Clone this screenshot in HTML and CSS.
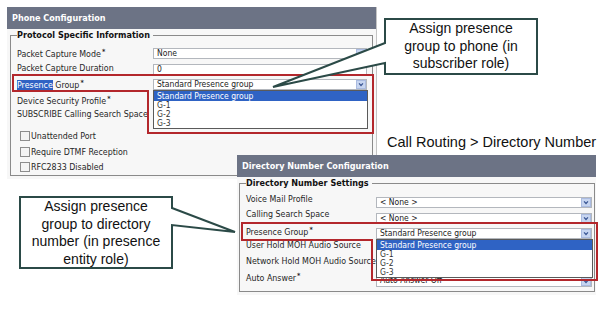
FILE: index.html
```html
<!DOCTYPE html>
<html lang="en">
    <head>
        <meta charset="UTF-8" />
        <meta name="viewport" content="width=device-width, initial-scale=1.0" />
        <title>Presence Group</title>
        <link rel="stylesheet" href="styles.css">
    </head>
    <body>
        <div class="slide">
            <!-- phone screenshot -->
            <div class="shot phone">
                <div class="bar">Phone Configuration</div>
                <div class="body">
                    <fieldset>
                        <legend>Protocol Specific Information</legend>
                        <div class="grid">
                            <div class="label">Packet Capture Mode<sup>*</sup></div>
                            <div class="ctl"><span class="val">None</span><span class="arrow"><svg viewBox="0 0 10 9"><path d="M2.5 3 L5 5.8 L7.5 3" /></svg></span></div>
                            <div class="label">Packet Capture Duration</div>
                            <div class="ctl input"><span class="val">0</span></div>
                            <div class="label"><span class="sel">Presence</span> Group<sup>*</sup></div>
                            <div class="ctl">
                                <span class="val">Standard Presence group</span><span class="arrow"><svg viewBox="0 0 10 9"><path d="M2.5 3 L5 5.8 L7.5 3" /></svg></span>
                                <ul class="list">
                                    <li class="hi">Standard Presence group</li>
                                    <li>G-1</li>
                                    <li>G-2</li>
                                    <li>G-3</li>
                                </ul>
                            </div>
                            <div class="label">Device Security Profile<sup>*</sup></div>
                            <div class="ctl"><span class="val"></span></div>
                            <div class="label">SUBSCRIBE Calling Search Space</div>
                            <div class="ctl"><span class="val"></span></div>
                        </div>
                        <div class="checks">
                            <div class="check"><span class="box"></span>Unattended Port</div>
                            <div class="check"><span class="box"></span>Require DTMF Reception</div>
                            <div class="check"><span class="box"></span>RFC2833 Disabled</div>
                        </div>
                    </fieldset>
                </div>
            </div>

            <p class="caption">Call Routing &gt; Directory Number</p>

            <!-- directory number screenshot -->
            <div class="shot dn">
                <div class="bar">Directory Number Configuration</div>
                <div class="body">
                    <fieldset>
                        <legend>Directory Number Settings</legend>
                        <div class="grid">
                            <div class="label">Voice Mail Profile</div>
                            <div class="ctl"><span class="val">&lt; None &gt;</span><span class="arrow"><svg viewBox="0 0 10 9"><path d="M2.5 3 L5 5.8 L7.5 3" /></svg></span></div>
                            <div class="label">Calling Search Space</div>
                            <div class="ctl"><span class="val">&lt; None &gt;</span><span class="arrow"><svg viewBox="0 0 10 9"><path d="M2.5 3 L5 5.8 L7.5 3" /></svg></span></div>
                            <div class="label">Presence Group<sup>*</sup></div>
                            <div class="ctl">
                                <span class="val">Standard Presence group</span><span class="arrow"><svg viewBox="0 0 10 9"><path d="M2.5 3 L5 5.8 L7.5 3" /></svg></span>
                                <ul class="list">
                                    <li class="hi">Standard Presence group</li>
                                    <li>G-1</li>
                                    <li>G-2</li>
                                    <li>G-3</li>
                                </ul>
                            </div>
                            <div class="label">User Hold MOH Audio Source</div>
                            <div class="ctl"><span class="val"></span></div>
                            <div class="label">Network Hold MOH Audio Source</div>
                            <div class="ctl"><span class="val"></span></div>
                            <div class="label">Auto Answer<sup>*</sup></div>
                            <div class="ctl low"><span class="val">Auto Answer Off</span><span class="arrow"><svg viewBox="0 0 10 9"><path d="M2.5 3 L5 5.8 L7.5 3" /></svg></span></div>
                        </div>
                    </fieldset>
                </div>
            </div>

            <!-- red highlight boxes and callout shapes -->
            <svg class="marks" width="616" height="309" viewBox="0 0 616 309">
                <path class="red" d="M13 75 H373 V133 H148 V91 H13 Z" />
                <path class="red" d="M242 223 H597 V280 H372 V240 H242 Z" />
                <path class="bubble" d="M385 19 H537 V74 H385 V63 L273 87 L385 43 Z" />
                <path class="bubble" d="M20 197 H172 V208 L235 232 L172 225 V268 H20 Z" />
            </svg>

            <div class="callout c1">Assign presence<br>group to phone (in<br>subscriber role)</div>
            <div class="callout c2">Assign presence<br>group to directory<br>number (in presence<br>entity role)</div>
        </div>
    </body>
</html>
```

FILE: styles.css
```css
* {
    margin: 0;
    padding: 0;
    box-sizing: border-box;
}
body {
    background-color: #fff;
    font-family: "DejaVu Sans Condensed", "DejaVu Sans", sans-serif;
    color: #222;
}
.slide {
    position: relative;
    width: 616px;
    height: 309px;
    overflow: hidden;
}
.shot {
    position: absolute;
    display: flex;
    flex-direction: column;
    background-color: #f7f7f7;
}
.phone {
    left: 7px;
    top: 7px;
    width: 370px;
    height: 172px;
    border-right: 1px solid #c4c4c4;
}
.dn {
    left: 237px;
    top: 155px;
    width: 359px;
    height: 140px;
}
.bar {
    height: 22px;
    line-height: 22px;
    padding-left: 5px;
    background-color: #6c7385;
    color: #fff;
    font-size: 9px;
    font-weight: bold;
}
.body {
    flex: 1;
    padding: 1px 3px 3px 3px;
}
.dn .body {
    padding: 1px 1px 3px 2px;
}
fieldset {
    border: 1px solid #8a8a8a;
    padding: 6px 5px 0 6px;
}
.dn fieldset {
    padding: 3px 2px 5px 6px;
}
legend {
    font-size: 9px;
    line-height: 11px;
    font-weight: bold;
    color: #111;
    padding: 0 3px 0 0;
}
.grid {
    display: grid;
    grid-template-columns: 136px 1fr;
    grid-auto-rows: 15.5px;
}
.dn .grid {
    grid-template-columns: 130px 1fr;
    grid-auto-rows: 15.6px;
}
.label {
    font-size: 8.8px;
    line-height: 11px;
    white-space: nowrap;
    color: #262626;
}
.dn .label {
    padding-top: 1.5px;
}
.label sup {
    font-size: 7px;
    font-weight: bold;
    vertical-align: 3px;
    margin-left: 1px;
}
.sel {
    background-color: #2f63c4;
    color: #fff;
}
.ctl {
    position: relative;
    display: flex;
    align-items: center;
    height: 11px;
    margin-top: 1px;
    background-color: #fff;
    border: 1px solid #b3b7bd;
}
.dn .ctl {
    margin-top: 5px;
}
.dn .ctl.low {
    margin-top: 6px;
}
.val {
    flex: 1;
    padding-left: 3px;
    font-size: 8.5px;
    line-height: 9px;
    white-space: nowrap;
}
.low .val {
    line-height: 12px;
    align-self: flex-end;
}
.arrow {
    width: 10px;
    height: 9px;
    background-color: #c7d5f0;
    border: 1px solid #aabbe0;
}
.arrow svg {
    display: block;
    width: 8px;
    height: 7px;
}
.arrow path {
    fill: none;
    stroke: #3a5694;
    stroke-width: 1.6;
}
.list {
    position: absolute;
    z-index: 2;
    left: -1px;
    top: 10px;
    width: calc(100% + 3px);
    list-style: none;
    background-color: #fff;
    border: 1px solid #5a5a5a;
}
.list li {
    height: 9px;
    line-height: 9px;
    padding-left: 3px;
    font-size: 8.5px;
    color: #333;
}
.list li.hi {
    height: 10px;
    line-height: 10px;
    background-color: #2f63c4;
    color: #fff;
}
.checks {
    margin-top: 4px;
}
.check {
    display: flex;
    align-items: center;
    height: 15.5px;
    padding-left: 3px;
    font-size: 8.8px;
    color: #262626;
}
.box {
    width: 10px;
    height: 10px;
    margin-right: 1px;
    border: 1px solid #8d8d8d;
    background-color: #f4f4f4;
}
.caption {
    position: absolute;
    left: 387px;
    top: 133px;
    font-family: "Liberation Sans", Arial, sans-serif;
    font-size: 14.5px;
    line-height: 18px;
    color: #111;
}
.marks {
    position: absolute;
    left: 0;
    top: 0;
    z-index: 3;
}
.red {
    fill: none;
    stroke: #b3272c;
    stroke-width: 2;
}
.bubble {
    fill: #fff;
    stroke: #2b4a47;
    stroke-width: 2;
    stroke-linejoin: miter;
}
.callout {
    position: absolute;
    z-index: 4;
    width: 152px;
    text-align: center;
    font-family: "Liberation Sans", Arial, sans-serif;
    font-size: 14px;
    line-height: 17.5px;
    color: #111;
}
.c1 {
    left: 385px;
    top: 20px;
}
.c2 {
    left: 20px;
    top: 198px;
}
```
